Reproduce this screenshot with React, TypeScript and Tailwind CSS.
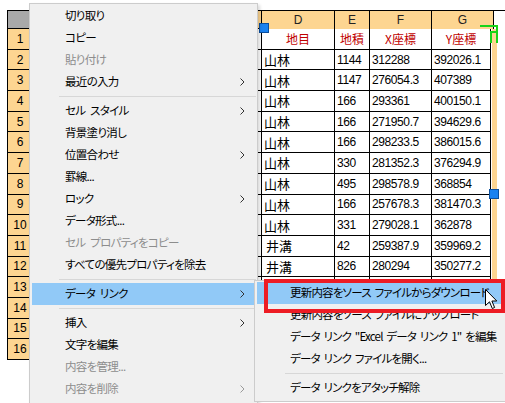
import React from "react"

type Item = { label?: string; disabled?: boolean; sub?: boolean; active?: boolean; sep?: boolean }

const menu: Item[] = [
  { label: "切り取り" },
  { label: "コピー" },
  { label: "貼り付け", disabled: true },
  { label: "最近の入力", sub: true },
  { sep: true },
  { label: "セル スタイル", sub: true },
  { label: "背景塗り消し" },
  { label: "位置合わせ", sub: true },
  { label: "罫線..." },
  { label: "ロック", sub: true },
  { label: "データ形式..." },
  { label: "セル プロパティをコピー", disabled: true },
  { label: "すべての優先プロパティを除去" },
  { sep: true },
  { label: "データ リンク", sub: true, active: true },
  { sep: true },
  { label: "挿入", sub: true },
  { label: "文字を編集" },
  { label: "内容を管理...", disabled: true },
  { label: "内容を削除", disabled: true, sub: true },
]

const submenu: Item[] = [
  { label: "更新内容をソース ファイルからダウンロード", active: true },
  { label: "更新内容をソース ファイルにアップロード" },
  { label: 'データ リンク "Excel データ リンク 1" を編集' },
  { label: "データ リンク ファイルを開く..." },
  { sep: true },
  { label: "データ リンクをアタッチ解除" },
]

const rows: string[][] = [
  ["山林", "1144", "312288", "392026.1"],
  ["山林", "1147", "276054.3", "407389"],
  ["山林", "166", "293361", "400150.1"],
  ["山林", "166", "271950.7", "394629.6"],
  ["山林", "166", "298233.5", "386015.6"],
  ["山林", "330", "281352.3", "376294.9"],
  ["山林", "495", "298578.9", "368854"],
  ["山林", "166", "257678.3", "381470.3"],
  ["山林", "331", "279028.1", "362878"],
  ["井溝", "42", "259387.9", "359969.2"],
  ["井溝", "826", "280294", "350277.2"],
  ["", "", "", ""],
  ["", "", "", ""],
  ["", "", "", ""],
  ["", "", "", ""],
]

function Chevron({ gray }: { gray?: boolean }) {
  return (
    <svg width="5" height="8" viewBox="0 0 5 8" className="absolute right-[10px] top-[7px]">
      <polyline points="0.5,0.5 4,4 0.5,7.5" fill="none" stroke={gray ? "#9a9a9a" : "#333"} strokeWidth="1" />
    </svg>
  )
}

function MenuList({ items, sepInset, tight }: { items: Item[]; sepInset: string; tight?: boolean }) {
  return (
    <div className="flex flex-col pt-px">
      {items.map((it, i) =>
        it.sep ? (
          <div key={i} className={`h-[7px] flex items-center ${sepInset}`}>
            <div className="h-px w-full bg-[#d7d7d7]" />
          </div>
        ) : (
          <div
            key={i}
            className={`relative mx-[2px] h-[22px] flex items-center whitespace-pre pl-[33px] text-[11.5px] leading-none ${
              tight ? "tracking-[-0.8px] [word-spacing:2px]" : "tracking-[-0.7px] [word-spacing:3px]"
            } ${it.active ? "bg-[#91c9f7]" : ""} ${it.disabled ? "text-[#8d8d8d]" : "text-black"}`}
          >
            {it.label}
            {it.sub && <Chevron gray={it.disabled} />}
          </div>
        )
      )}
    </div>
  )
}

export default function App() {
  const cjk = "font-['Noto_Sans_CJK_JP',sans-serif] [font-feature-settings:'palt']"
  const num = "font-['Liberation_Sans',Arial,sans-serif] text-[12px] tracking-[-0.4px]"

  return (
    <div className="relative w-[505px] h-[403px] overflow-hidden bg-white">
      {/* ── spreadsheet ── */}
      <div className="pt-[10px] pl-[7px]">
        <div className="flex h-[19px] border-t border-black">
          <div className="w-[26px] border-l border-r border-b border-black bg-[#a9a9a9]" />
          <div className="w-[229px] border-r border-b border-black bg-[#fdd591]" />
          {[["D", 73], ["E", 35], ["F", 62], ["G", 62]].map(([c, w]) => (
            <div
              key={c}
              style={{ width: w as number }}
              className="flex items-center justify-center border-r border-black bg-[#fdd591] font-['Liberation_Sans',Arial,sans-serif] text-[12px] text-[#222]"
            >
              {c}
            </div>
          ))}
        </div>
        <div className="flex h-[20.7px]">
          <div className="w-[26px] flex items-center justify-center border-l border-r border-b border-black bg-[#fdd591] font-['Liberation_Sans',Arial,sans-serif] text-[12px]">
            1
          </div>
          <div className="w-[229px] border-r border-b border-black" />
          {[["地目", 73], ["地積", 35], ["X座標", 62], ["Y座標", 59]].map(([c, w]) => (
            <div
              key={c}
              style={{ width: w as number }}
              className={`flex items-center justify-center border-r border-b border-black text-[12px] leading-none text-[#c00000] ${cjk}`}
            >
              {c}
            </div>
          ))}
        </div>
        {rows.map((r, i) => (
          <div key={i} className="flex h-[20.7px]">
            <div className="w-[26px] flex items-center justify-center border-l border-r border-b border-black bg-[#fdd591] font-['Liberation_Sans',Arial,sans-serif] text-[12px]">
              {i + 2}
            </div>
            <div className="w-[229px] border-r border-b border-black" />
            <div className={`w-[73px] flex items-center border-r border-b border-black pl-[2px] text-[13px] leading-none ${cjk} ${r[0] === "井溝" ? "pl-[4px]" : ""}`}>
              {r[0]}
            </div>
            <div className={`w-[35px] flex items-center border-r border-b border-black pl-[2px] ${num}`}>{r[1]}</div>
            <div className={`w-[62px] flex items-center border-r border-b border-black pl-[2px] ${num}`}>{r[2]}</div>
            <div className={`w-[59px] flex items-center border-r border-b border-black pl-[2px] ${num}`}>{r[3]}</div>
          </div>
        ))}
      </div>

      {/* selection edge + grips */}
      <div className="absolute left-[492px] top-[29px] w-[5px] h-[252px] bg-[#fdd591]" />
      <svg className="absolute left-[479px] top-[24px]" width="20" height="20" viewBox="0 0 20 20">
        <polyline points="1,2 18,2 18,19" fill="none" stroke="#19d419" strokeWidth="2" />
        <polyline points="12,19 12,8 17,8" fill="none" stroke="#19d419" strokeWidth="2" />
      </svg>
      <div className="absolute left-[259px] top-[23px] w-[10px] h-[10px] bg-[#1a82f0] border border-[#0b4f9e]" />
      <div className="absolute left-[489px] top-[189px] w-[10px] h-[10px] bg-[#1a82f0] border border-[#0b4f9e]" />

      {/* ── context menu ── */}
      <div className={`absolute left-[29px] top-[3px] w-[229px] h-[410px] bg-[#f0f0f0] border border-[#cccccc] shadow-[2px_2px_3px_rgba(0,0,0,0.15)] ${cjk}`}>
        <MenuList items={menu} sepInset="pl-[29px] pr-[1px]" />
      </div>

      {/* ── submenu ── */}
      <div className={`absolute left-[254px] top-[280px] w-[256px] h-[122px] bg-[#f0f0f0] border border-[#cccccc] ${cjk}`}>
        <MenuList items={submenu} sepInset="pl-[30px] pr-[6px]" tight />
      </div>

      {/* highlight box */}
      <div className="absolute left-[264px] top-[279px] w-[241px] h-[34px] border-[4px] border-[#ed1c24]" />

      {/* cursor */}
      <svg className="absolute left-[485px] top-[289px]" width="13" height="21" viewBox="0 0 13 21">
        <path d="M0.5,0.5 L0.5,16.5 L4.5,12.8 L7.3,19.5 L9.6,18.5 L6.9,12 L11.8,12 Z" fill="#fff" stroke="#000" strokeWidth="1" strokeLinejoin="round" />
      </svg>
    </div>
  )
}
